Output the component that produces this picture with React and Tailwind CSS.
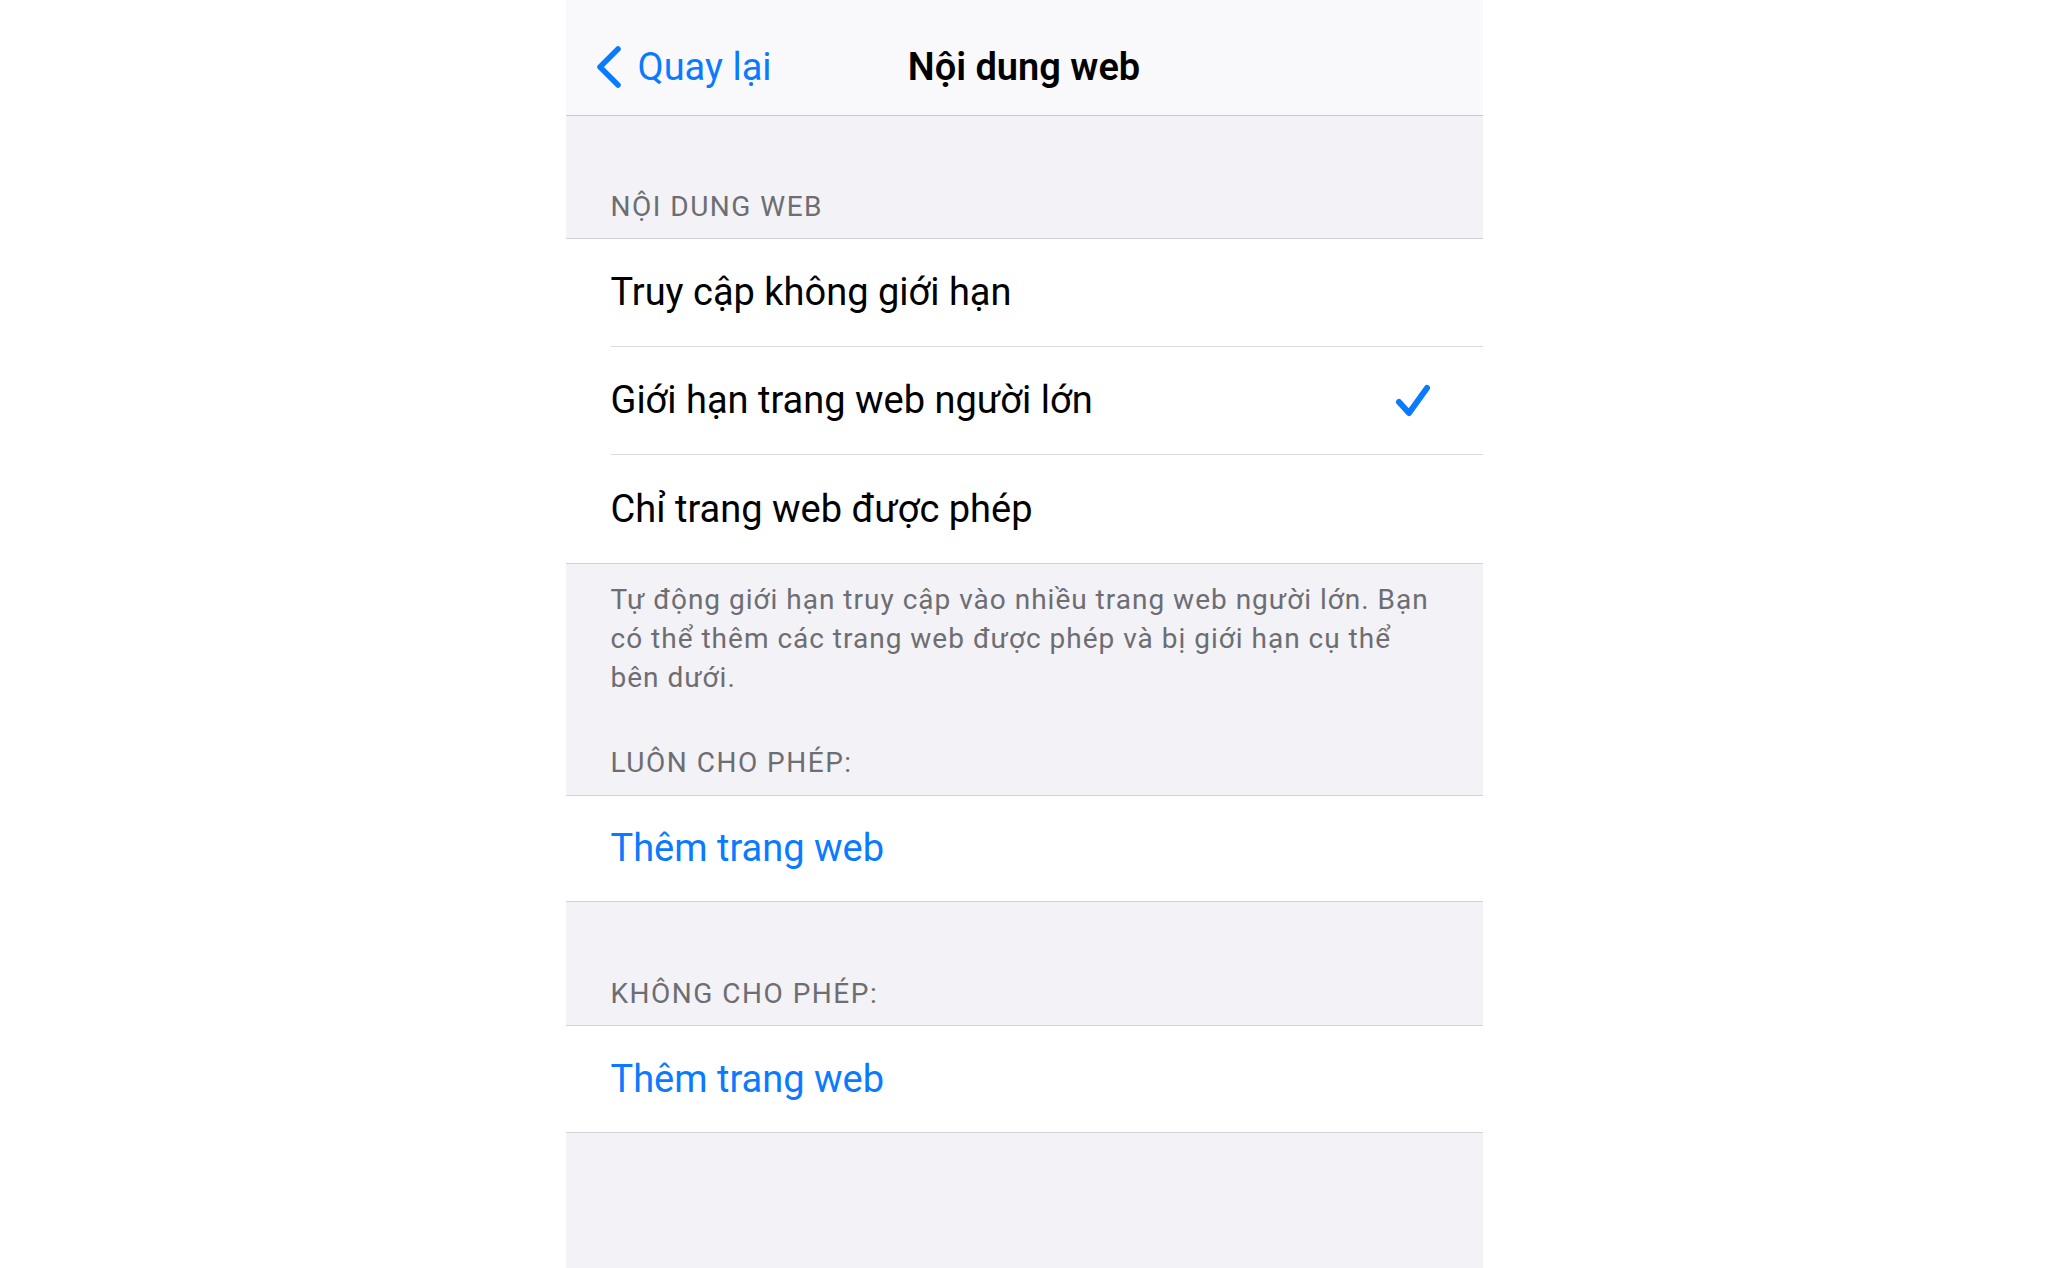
import React from 'react';

const blue = 'text-[#0a7aff]';

const SectionHeader = ({ children, className = '' }) => (
  <div className={`flex items-end px-[45px] ${className}`}>
    <p className="text-[28px] leading-[32px] tracking-[1.5px] text-[#6d6d72] uppercase">{children}</p>
  </div>
);

const Row = ({ children, checked, last }) => (
  <div className="pl-[45px] bg-white">
    <div className={`h-[108px] flex items-center justify-between pr-[54px] ${last ? '' : 'border-b border-[#dcdce0]'}`}>
      {children}
      {checked && (
        <svg width="36" height="34" viewBox="0 0 36 34" className="mr-[-2px]">
          <polyline
            points="4,18 14,29 32,4"
            fill="none"
            stroke="#0a7aff"
            strokeWidth="6"
            strokeLinecap="round"
            strokeLinejoin="round"
          />
        </svg>
      )}
    </div>
  </div>
);

const Group = ({ children }) => (
  <div className="border-y border-[#d1d1d6] bg-white">{children}</div>
);

export default function App() {
  return (
    <div className="min-h-screen bg-white font-['Roboto',sans-serif]">
      <div className="w-[917px] h-[1268px] mx-auto bg-[#f2f2f7] overflow-hidden">
        {/* navigation bar */}
        <div className="h-[116px] grid grid-cols-[1fr_auto_1fr] items-center pt-[18px] bg-[#f9f9fb] border-b border-[#c8c8cc]">
          <div className={`flex items-center pl-[29px] ${blue}`}>
            <svg width="28" height="44" viewBox="0 0 28 44">
              <polyline
                points="23,4 5,22 23,40"
                fill="none"
                stroke="#0a7aff"
                strokeWidth="5.5"
                strokeLinecap="round"
                strokeLinejoin="round"
              />
            </svg>
            <span className="ml-[15px] text-[38px] leading-none">Quay lại</span>
          </div>
          <h1 className="text-[38px] leading-none font-semibold text-black">Nội dung web</h1>
          <div />
        </div>

        <SectionHeader className="h-[122px] pb-[15px]">Nội dung web</SectionHeader>
        <Group>
          <Row><span className="text-[38px] text-black">Truy cập không giới hạn</span></Row>
          <Row checked><span className="text-[38px] text-black">Giới hạn trang web người lớn</span></Row>
          <Row last><span className="text-[38px] text-black">Chỉ trang web được phép</span></Row>
        </Group>

        <div className="px-[45px] pt-[16px] text-[28px] leading-[39px] tracking-[1px] text-[#6d6d72] whitespace-nowrap">
          Tự động giới hạn truy cập vào nhiều trang web người lớn. Bạn<br />
          có thể thêm các trang web được phép và bị giới hạn cụ thể<br />
          bên dưới.
        </div>
        <SectionHeader className="h-[98px] pb-[16px]">Luôn cho phép:</SectionHeader>
        <Group>
          <div className="h-[105px] flex items-center px-[45px]">
            <span className={`text-[38px] ${blue}`}>Thêm trang web</span>
          </div>
        </Group>

        <SectionHeader className="h-[123px] pb-[15px]">Không cho phép:</SectionHeader>
        <Group>
          <div className="h-[106px] flex items-center px-[45px]">
            <span className={`text-[38px] ${blue}`}>Thêm trang web</span>
          </div>
        </Group>
      </div>
    </div>
  );
}
